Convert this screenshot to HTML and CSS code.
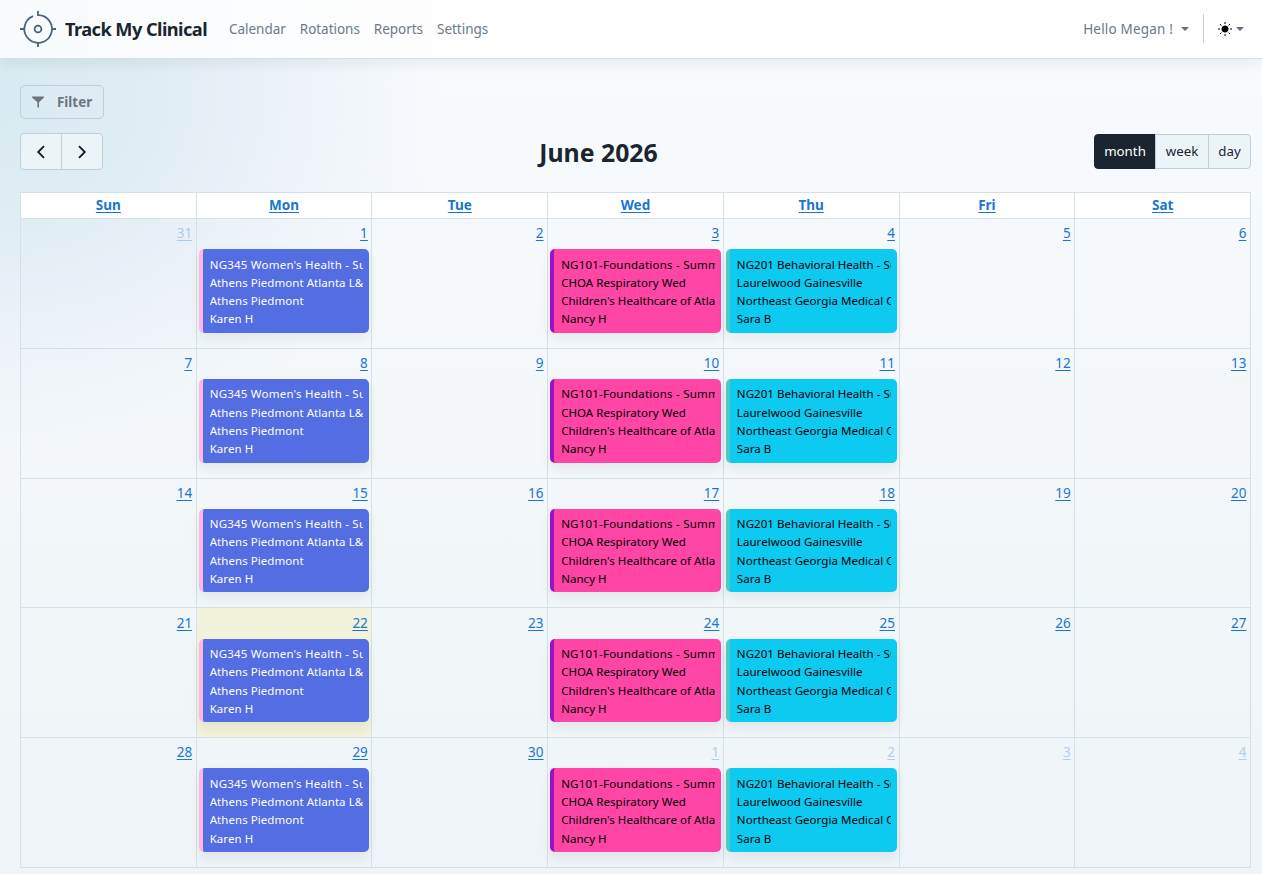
FILE: index.html
```html
<!DOCTYPE html>
<html lang="en">
<head>
  <meta charset="UTF-8">
  <meta name="viewport" content="width=device-width, initial-scale=1.0">
  <title>Track My Clinical</title>
  <link rel="stylesheet" href="styles.css">
</head>
<body>

<nav class="navbar">
  <a class="brand" href="#">
    <svg class="logo" width="36" height="36" viewBox="0 0 36 36" fill="none" stroke="#48647a" stroke-width="1.8">
      <path d="M13 5.2A13.8 13.8 0 1 0 18 4.2V0M0 18h4.2M31.8 18H36M18 31.8V36"/>
      <circle cx="18" cy="18" r="3.4"/>
    </svg>
    <span>Track My Clinical</span>
  </a>
  <div class="menu">
    <a href="#">Calendar</a>
    <a href="#">Rotations</a>
    <a href="#">Reports</a>
    <a href="#">Settings</a>
  </div>
  <div class="user-menu">
    <a class="hello" href="#"><span>Hello Megan !</span><i class="caret"></i></a>
    <a class="theme" href="#">
      <svg width="14" height="14" viewBox="0 0 14 14" stroke="#000" stroke-width="1">
        <circle cx="7" cy="7" r="3.1" fill="#000"/>
        <path d="M7 0v2M7 12v2M0 7h2M12 7h2M2 2l1.4 1.4M10.6 10.6L12 12M2 12l1.4-1.4M10.6 3.4L12 2"/>
      </svg>
      <i class="caret"></i>
    </a>
  </div>
</nav>

<main>
  <button class="filter">
    <svg width="12" height="12" viewBox="0 0 12 12" fill="#6c757d"><path d="M0 .5h12v1L7 6.2v5.3H5.4V6.2L0 1.5z"/></svg>
    <span>Filter</span>
  </button>

  <div class="toolbar">
    <div class="btn-group nav-group">
      <button><svg width="10" height="14" viewBox="0 0 10 14"><path d="M8 1.2L2.2 7 8 12.8"/></svg></button>
      <button><svg width="10" height="14" viewBox="0 0 10 14"><path d="M2 1.2L7.8 7 2 12.8"/></svg></button>
    </div>
    <h2>June 2026</h2>
    <div class="btn-group view-group">
      <button class="active">month</button>
      <button>week</button>
      <button>day</button>
    </div>
  </div>

  <div class="calendar" id="calendar"></div>
</main>

<script>
  const dayNames = ['Sun', 'Mon', 'Tue', 'Wed', 'Thu', 'Fri', 'Sat'];

  // Weekly rotations, keyed by day of the week
  const rotations = {
    1: { type: 'womens', lines: ["NG345 Women's Health - Summer 2026", 'Athens Piedmont Atlanta L&D Mon', 'Athens Piedmont', 'Karen H'] },
    3: { type: 'foundations', lines: ['NG101-Foundations - Summer 2026', 'CHOA Respiratory Wed', "Children's Healthcare of Atlanta", 'Nancy H'] },
    4: { type: 'behavioral', lines: ['NG201 Behavioral Health - Summer 2026', 'Laurelwood Gainesville', 'Northeast Georgia Medical Center', 'Sara B'] }
  };

  const calendar = document.getElementById('calendar');

  function add(parent, tag, className, text) {
    const el = document.createElement(tag);
    el.className = className;
    if (text) el.textContent = text;
    parent.appendChild(el);
    return el;
  }

  dayNames.forEach(function(name) {
    const head = add(calendar, 'div', 'day-head');
    add(head, 'a', 'day-name', name);
  });

  for (let i = 0; i < 35; i++) {
    const date = new Date(2026, 4, 31 + i);
    const cell = add(calendar, 'div', 'day');
    if (date.getMonth() !== 5) cell.classList.add('other');
    else if (date.getDate() === 22) cell.classList.add('today');
    add(cell, 'a', 'day-number', String(date.getDate()));

    const rotation = rotations[i % 7];
    if (rotation) {
      const event = add(cell, 'div', 'event ' + rotation.type);
      rotation.lines.forEach(function(line) {
        add(event, 'div', 'event-line', line);
      });
    }
  }
</script>

</body>
</html>
```
FILE: styles.css
```css
* {
  box-sizing: border-box;
}
body {
  margin: 0;
  height: 874px;
  overflow: hidden;
  font-family: "Noto Sans", "Open Sans", sans-serif;
  font-size: 13.5px;
  color: #1a252f;
  background:
    radial-gradient(ellipse 440px 350px at 0 100px, #d8eaf1 0%, rgba(222, 237, 242, 0.95) 35%, rgba(232, 240, 247, 0.8) 62%, rgba(247, 250, 253, 0) 100%),
    linear-gradient(#f9fbfe, #eef4f7);
}
a {
  color: #6c7a89;
  text-decoration: none;
}
button {
  font-family: inherit;
  color: #1a252f;
  border: 1px solid #bccfda;
  background-color: #edf4f8;
  padding: 0;
}
.navbar {
  display: flex;
  align-items: center;
  height: 59px;
  padding: 0 18px 1px 20px;
  background: linear-gradient(90deg, #f8fbfd, #fefefe 35%);
  border-bottom: 1px solid #d5e1ea;
  box-shadow: 0 4px 14px rgba(26, 37, 47, 0.08);
}
.brand {
  display: flex;
  align-items: center;
  gap: 9px;
  width: 209px;
  font-size: 18.2px;
  font-weight: bold;
  letter-spacing: -0.55px;
  white-space: nowrap;
  color: #1a252f;
}
.menu {
  display: flex;
  gap: 14px;
  flex: 1;
  letter-spacing: -0.03px;
}
.user-menu {
  display: flex;
  align-items: center;
}
.hello {
  display: flex;
  align-items: center;
  gap: 8px;
  padding-right: 14px;
  letter-spacing: 0.18px;
}
.caret {
  border: 4px solid transparent;
  border-top-color: #5f7182;
  border-bottom: 0;
}
.theme {
  display: flex;
  align-items: center;
  gap: 4px;
  height: 29px;
  padding-left: 14px;
  border-left: 1px solid #c5ced6;
}
main {
  padding: 26px 11px 0 20px;
}
.filter {
  display: flex;
  align-items: center;
  gap: 13px;
  width: 84px;
  height: 34px;
  padding-left: 11px;
  border-radius: 5px;
  background: transparent;
  color: #6c757d;
  font-size: 13.4px;
  font-weight: bold;
}
.toolbar {
  display: flex;
  justify-content: space-between;
  align-items: center;
  height: 37px;
  margin-top: 14px;
}
.toolbar h2 {
  margin: 1px 0 0;
  font-size: 24.8px;
}
.btn-group {
  display: flex;
}
.btn-group button + button {
  margin-left: -1px;
}
.btn-group button:first-child {
  border-radius: 4px 0 0 4px;
}
.btn-group button:last-child {
  border-radius: 0 4px 4px 0;
}
.nav-group button {
  display: flex;
  align-items: center;
  justify-content: center;
  width: 42px;
  height: 37px;
}
.nav-group path {
  fill: none;
  stroke: #0d1a26;
  stroke-width: 1.8;
}
.view-group {
  margin-top: -1px;
}
.view-group button {
  height: 35px;
  width: 54px;
  font-size: 13.3px;
}
.view-group button:last-child {
  width: 43px;
}
.view-group .active {
  width: 62px;
  color: #fff;
  background-color: #1a252f;
  border-color: #1a252f;
}
.calendar {
  display: grid;
  grid-template-columns: repeat(7, 1fr);
  grid-template-rows: 26px repeat(5, 129.8px);
  margin-top: 22px;
  border-top: 1px solid #d5e1e8;
  border-left: 1px solid #d5e1e8;
}
.day-head,
.day {
  min-width: 0;
  border-right: 1px solid #d5e1e8;
  border-bottom: 1px solid #d5e1e8;
}
.day-head {
  text-align: center;
  line-height: 25px;
  background-color: #fff;
}
.day-name,
.day-number {
  color: #1976d2;
  text-decoration: underline;
  text-underline-offset: 2px;
}
.day-name {
  font-weight: bold;
}
.day-number {
  display: block;
  height: 30.2px;
  padding: 4.2px 3.6px 0 0;
  line-height: 21px;
  text-align: right;
}
.other .day-number {
  opacity: 0.3;
}
.today {
  background-color: #f3f2da;
}
.event {
  height: 83.7px;
  margin: 0 2px;
  padding: 6.4px 6px 0 7px;
  border-left: 4px solid;
  border-radius: 5px;
  box-shadow: 0 6px 12px rgba(26, 37, 47, 0.07);
  font-size: 11.5px;
  line-height: 18.3px;
  letter-spacing: 0.05px;
}
.event-line {
  overflow: hidden;
  white-space: nowrap;
}
.womens {
  color: #fff;
  background-color: #536de2;
  border-color: #ffb7e2;
}
.womens .event-line:first-child,
.foundations .event-line:first-child {
  letter-spacing: 0.22px;
}
.foundations {
  color: #000;
  background-color: #ff45a5;
  border-color: #9911cc;
}
.behavioral {
  color: #000;
  background-color: #0dcaf0;
  border-color: #4dcac5;
}
```
